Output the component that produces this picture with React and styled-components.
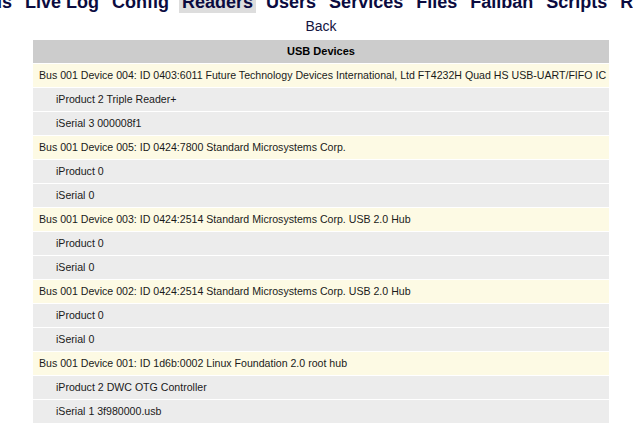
import React from 'react';
import styled, { createGlobalStyle } from 'styled-components';

const GlobalStyle = createGlobalStyle`
  html, body {
    margin: 0;
    padding: 0;
    background: #ffffff;
    overflow: hidden;
  }
  body {
    font-family: "Liberation Sans", Arial, sans-serif;
  }
`;

const Page = styled.div`
  width: 633px;
  height: 430px;
  overflow: hidden;
`;

const Menu = styled.ul`
  display: flex;
  gap: 7px;
  margin: -8px 0 0 -46px;
  padding: 0;
  list-style: none;
  white-space: nowrap;
`;

const MenuItem = styled.li`
  padding: 0 3px;
  font-size: 18px;
  font-weight: bold;
  color: #0b0b40;
  background: ${(p) => (p.$active ? '#dddddd' : 'transparent')};
`;

const BackLink = styled.a`
  display: block;
  width: 576px;
  margin: 5px 0 0 33px;
  text-align: center;
  font-size: 14px;
  color: #14143f;
  text-decoration: none;
`;

const Table = styled.div`
  display: flex;
  flex-direction: column;
  gap: 1px;
  width: 576px;
  margin: 6px 0 0 33px;
`;

const Header = styled.div`
  height: 23px;
  line-height: 23px;
  background: #cccccc;
  text-align: center;
  font-size: 11px;
  font-weight: bold;
  color: #000;
`;

const Row = styled.div`
  height: 23px;
  line-height: 23px;
  padding-left: ${(p) => (p.$sub ? '23px' : '6px')};
  background: ${(p) => (p.$sub ? '#ececec' : '#fdfae4')};
  font-size: 10.6px;
  color: #1a1a1a;
  white-space: nowrap;
  overflow: hidden;
`;

const menu = ['Status', 'Live Log', 'Config', 'Readers', 'Users', 'Services', 'Files', 'Failban', 'Scripts', 'Restart'];

const devices = [
  {
    bus: 'Bus 001 Device 004: ID 0403:6011 Future Technology Devices International, Ltd FT4232H Quad HS USB-UART/FIFO IC',
    product: 'iProduct 2 Triple Reader+',
    serial: 'iSerial 3 000008f1',
  },
  {
    bus: 'Bus 001 Device 005: ID 0424:7800 Standard Microsystems Corp.',
    product: 'iProduct 0',
    serial: 'iSerial 0',
  },
  {
    bus: 'Bus 001 Device 003: ID 0424:2514 Standard Microsystems Corp. USB 2.0 Hub',
    product: 'iProduct 0',
    serial: 'iSerial 0',
  },
  {
    bus: 'Bus 001 Device 002: ID 0424:2514 Standard Microsystems Corp. USB 2.0 Hub',
    product: 'iProduct 0',
    serial: 'iSerial 0',
  },
  {
    bus: 'Bus 001 Device 001: ID 1d6b:0002 Linux Foundation 2.0 root hub',
    product: 'iProduct 2 DWC OTG Controller',
    serial: 'iSerial 1 3f980000.usb',
  },
];

export default function App() {
  return (
    <Page>
      <GlobalStyle />
      <Menu>
        {menu.map((m) => (
          <MenuItem key={m} $active={m === 'Readers'}>{m}</MenuItem>
        ))}
      </Menu>
      <BackLink href="#">Back</BackLink>
      <Table>
        <Header>USB Devices</Header>
        {devices.map((d) => (
          <React.Fragment key={d.bus}>
            <Row>{d.bus}</Row>
            <Row $sub>{d.product}</Row>
            <Row $sub>{d.serial}</Row>
          </React.Fragment>
        ))}
      </Table>
    </Page>
  );
}
